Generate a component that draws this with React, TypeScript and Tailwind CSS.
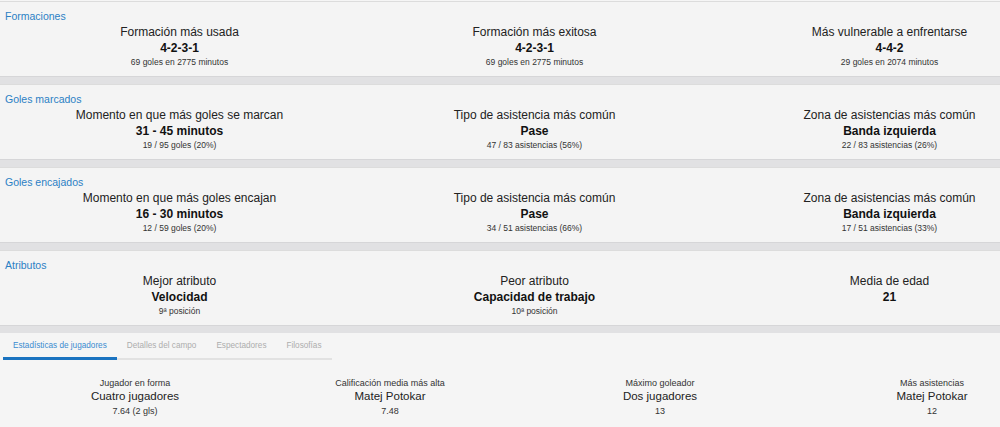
import React from 'react'

/** 集計セクションの定義 */
type Stat = { label: string; value: string; sub: string }

const SECTIONS: { title: string; stats: Stat[] }[] = [
  {
    title: 'Formaciones',
    stats: [
      { label: 'Formación más usada', value: '4-2-3-1', sub: '69 goles en 2775 minutos' },
      { label: 'Formación más exitosa', value: '4-2-3-1', sub: '69 goles en 2775 minutos' },
      { label: 'Más vulnerable a enfrentarse', value: '4-4-2', sub: '29 goles en 2074 minutos' },
    ],
  },
  {
    title: 'Goles marcados',
    stats: [
      { label: 'Momento en que más goles se marcan', value: '31 - 45 minutos', sub: '19 / 95 goles (20%)' },
      { label: 'Tipo de asistencia más común', value: 'Pase', sub: '47 / 83 asistencias (56%)' },
      { label: 'Zona de asistencias más común', value: 'Banda izquierda', sub: '22 / 83 asistencias (26%)' },
    ],
  },
  {
    title: 'Goles encajados',
    stats: [
      { label: 'Momento en que más goles encajan', value: '16 - 30 minutos', sub: '12 / 59 goles (20%)' },
      { label: 'Tipo de asistencia más común', value: 'Pase', sub: '34 / 51 asistencias (66%)' },
      { label: 'Zona de asistencias más común', value: 'Banda izquierda', sub: '17 / 51 asistencias (33%)' },
    ],
  },
  {
    title: 'Atributos',
    stats: [
      { label: 'Mejor atributo', value: 'Velocidad', sub: '9ª posición' },
      { label: 'Peor atributo', value: 'Capacidad de trabajo', sub: '10ª posición' },
      { label: 'Media de edad', value: '21', sub: '' },
    ],
  },
]

const TABS = ['Estadísticas de jugadores', 'Detalles del campo', 'Espectadores', 'Filosofías']

const PLAYER_STATS: Stat[] = [
  { label: 'Jugador en forma', value: 'Cuatro jugadores', sub: '7.64 (2 gls)' },
  { label: 'Calificación media más alta', value: 'Matej Potokar', sub: '7.48' },
  { label: 'Máximo goleador', value: 'Dos jugadores', sub: '13' },
  { label: 'Más asistencias', value: 'Matej Potokar', sub: '12' },
]

export default function App() {
  return (
    <div
      className="w-[1000px] h-[427px] overflow-hidden bg-[#f5f5f5] pt-px"
      style={{ fontFamily: '"Liberation Sans", Arial, sans-serif' }}
    >
      {/* 集計パネル */}
      {SECTIONS.map((section) => (
        <div key={section.title} className="border-t border-[#dcdcdc]">
          <div className="h-[74px] bg-[#f4f4f4] pt-2">
            <h2 className="px-[5px] text-[10.5px] leading-[12px] text-[#2b80c4]">{section.title}</h2>
            <div className="mt-[2px] grid grid-cols-[355px_355px_355px] pl-[2px]">
              {section.stats.map((stat) => (
                <div key={stat.label} className="flex flex-col items-center text-center whitespace-nowrap">
                  <span className="text-[12px] leading-[16px] text-[#222]">{stat.label}</span>
                  <span className="text-[12px] leading-[16px] font-bold text-[#111]">{stat.value}</span>
                  <span className="text-[8.5px] leading-[12px] text-[#333]">{stat.sub}</span>
                </div>
              ))}
            </div>
          </div>
          <div className="h-2 bg-[#e1e1e3] border-t border-[#d6d6d8]" />
        </div>
      ))}

      {/* タブ */}
      <div className="pl-[3px] pt-[2px]">
        <div className="flex w-fit border-b-2 border-[#e2e2e2]">
          {TABS.map((tab, index) => (
            <div
              key={tab}
              className={`-mb-[2px] whitespace-nowrap px-[10px] pt-[5px] pb-[6px] text-[8.2px] leading-[11px] ${
                index === 0 ? 'border-b-[3px] border-[#1a73c0] text-[#3a8bd0]' : 'border-b-[3px] border-transparent text-[#adadad]'
              }`}
            >
              {tab}
            </div>
          ))}
        </div>
      </div>

      {/* 選手統計 */}
      <div className="mt-[17px] grid grid-cols-[270px_240px_300px_244px]">
        {PLAYER_STATS.map((stat) => (
          <div key={stat.label} className="flex flex-col items-center text-center whitespace-nowrap">
            <span className="text-[9px] leading-[12px] text-[#333]">{stat.label}</span>
            <span className="text-[11.5px] leading-[15px] text-[#222]">{stat.value}</span>
            <span className="text-[9px] leading-[14px] text-[#333]">{stat.sub}</span>
          </div>
        ))}
      </div>
    </div>
  )
}
